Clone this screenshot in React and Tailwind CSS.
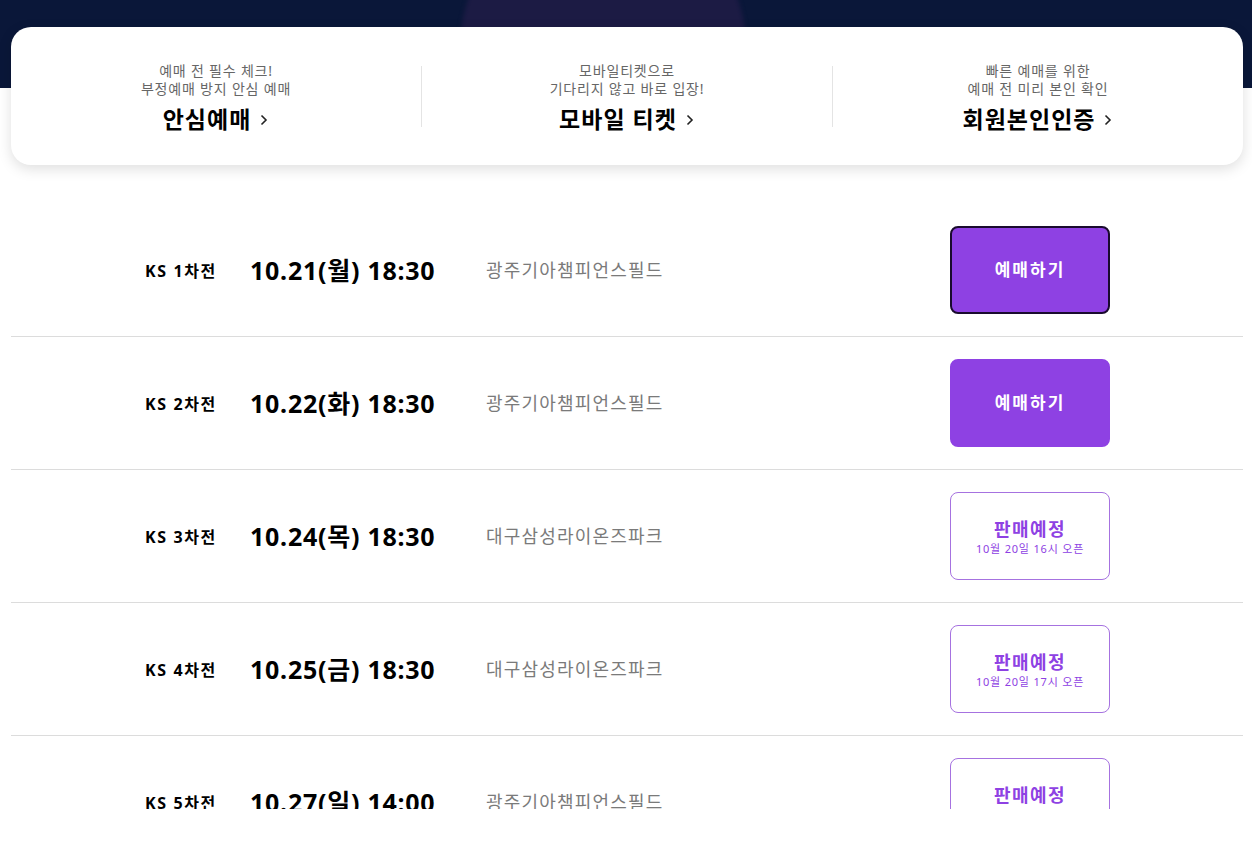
import React from 'react';

const font = { fontFamily: '"Noto Sans", "Noto Sans CJK KR", sans-serif' };

const guides = [
  { lines: ['예매 전 필수 체크!', '부정예매 방지 안심 예매'], title: '안심예매' },
  { lines: ['모바일티켓으로', '기다리지 않고 바로 입장!'], title: '모바일 티켓' },
  { lines: ['빠른 예매를 위한', '예매 전 미리 본인 확인'], title: '회원본인인증' },
];

const games = [
  { round: 'KS 1차전', date: '10.21(월) 18:30', place: '광주기아챔피언스필드', open: true, focused: true },
  { round: 'KS 2차전', date: '10.22(화) 18:30', place: '광주기아챔피언스필드', open: true },
  { round: 'KS 3차전', date: '10.24(목) 18:30', place: '대구삼성라이온즈파크', note: '10월 20일 16시 오픈' },
  { round: 'KS 4차전', date: '10.25(금) 18:30', place: '대구삼성라이온즈파크', note: '10월 20일 17시 오픈' },
  { round: 'KS 5차전', date: '10.27(일) 14:00', place: '광주기아챔피언스필드', note: '10월 21일 16시 오픈' },
];

const Chevron = () => (
  <svg width="10" height="14" viewBox="0 0 10 14" className="ml-[8px] mt-[3px]">
    <path d="M2.5 2.5 L7 7 L2.5 11.5" fill="none" stroke="#222" strokeWidth="1.6" />
  </svg>
);

const GameRow = ({ game }) => (
  <div className="flex items-center h-[133px] pl-[134px] pr-[133px] border-b border-[#dcdcdc]">
    <div className="w-[105px] text-[16px] font-bold text-black tracking-[1.6px] pt-[1px]">{game.round}</div>
    <div className="w-[236px] text-[25px] font-bold text-black tracking-[0.75px] pt-[1px]">{game.date}</div>
    <div className="flex-1 text-[18px] text-[#7a7a7a] tracking-[1.2px]">{game.place}</div>
    {game.open ? (
      <button
        className={`w-[160px] h-[88px] rounded-[8px] bg-[#8e41e3] text-white text-[17px] font-bold tracking-[2px] ${
          game.focused ? 'border-2 border-[#1a0b2e]' : 'border-2 border-[#8e41e3]'
        }`}
      >
        예매하기
      </button>
    ) : (
      <button className="w-[160px] h-[88px] rounded-[8px] border border-[#a672e0] bg-white flex flex-col items-center justify-center pt-[2px]">
        <span className="text-[18px] font-bold text-[#8e41e3] leading-[22px] tracking-[1.5px]">판매예정</span>
        <span className="text-[11px] text-[#8e41e3] leading-[17px] tracking-[0.8px]">{game.note}</span>
      </button>
    )}
  </div>
);

export default function App() {
  return (
    <div className="w-[1252px] h-[843px] bg-white" style={font}>
      <div className="h-[809px] overflow-hidden relative">
        <div className="absolute top-0 left-0 right-0 h-[88px] bg-[#0a1739] overflow-hidden">
          <div className="absolute left-[460px] top-[-96px] w-[286px] h-[286px] rounded-full bg-[#1c1b44] blur-[2px]" />
        </div>
        <div className="relative pt-[27px] pl-[11px] pr-[9px]">
          <div className="bg-white rounded-[20px] shadow-[0_4px_14px_rgba(0,0,0,0.13)] h-[138px] flex items-center">
            {guides.map((g, i) => (
              <React.Fragment key={g.title}>
                {i > 0 && <div className="w-px h-[61px] bg-[#e4e4e4]" />}
                <div className="flex-1 flex flex-col items-center pt-[3px]">
                  <div className="text-[14px] leading-[18px] text-[#666] text-center tracking-[0.8px]">
                    {g.lines.map((l) => (
                      <div key={l}>{l}</div>
                    ))}
                  </div>
                  <div className="flex items-center mt-[6px] text-[23px] font-bold text-black leading-[30px] tracking-[1px]">
                    {g.title}
                    <Chevron />
                  </div>
                </div>
              </React.Fragment>
            ))}
          </div>
          <div className="mt-[39px]">
            {games.map((g) => (
              <GameRow key={g.round} game={g} />
            ))}
          </div>
        </div>
      </div>
    </div>
  );
}
